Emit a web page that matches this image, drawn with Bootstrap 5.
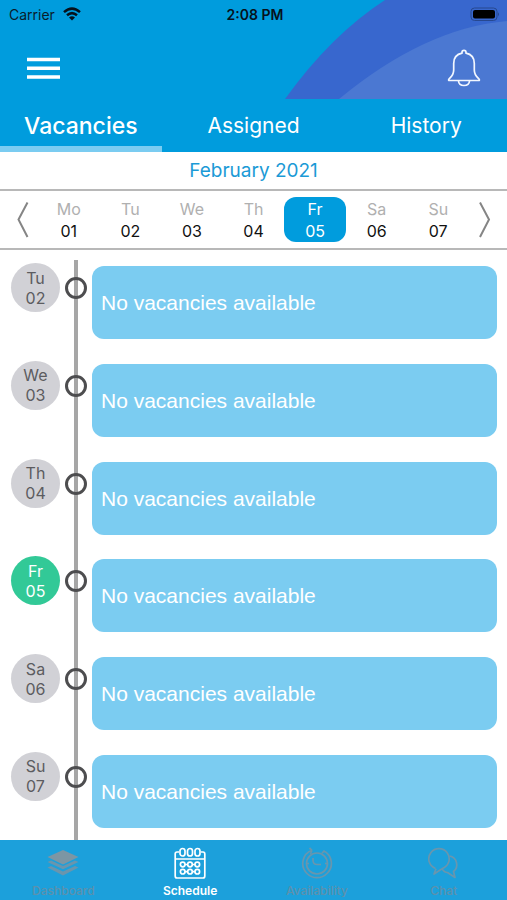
<!DOCTYPE html>
<html lang="en">
<head>
<meta charset="utf-8">
<meta name="viewport" content="width=device-width, initial-scale=1">
<title>Schedule</title>
<link href="https://cdn.jsdelivr.net/npm/bootstrap@5.3.0/dist/css/bootstrap.min.css" rel="stylesheet">
<style>
  :root { --sky: #009cdd; --pale: #7bccf1; --rule: #b8b8b8; }
  body { font-family: Inter, "Liberation Sans", sans-serif; background: #fff; color: #111; }
  button { border: 0; background: none; padding: 0; color: inherit; }
  svg { display: block; }
  .app-head { background: var(--sky); height: 99px; overflow: hidden; }
  .head-art { position: absolute; right: 0; top: 0; }
  .status-bar { height: 28px; font-size: 14px; padding: 0 6px 0 9px; color: #0a1c2c; }
  .status-bar > * { flex: 1 1 0; }
  .clock { font-weight: 600; color: #06121c; }
  .head-tools { padding: 20px 26px 0 27px; }
  .tab-bar { background: var(--sky); gap: 11px; height: 53px; }
  .tab-bar button { flex: 1 1 0; color: #fff; font-size: 21px; border-bottom: 6px solid transparent; padding-top: 7px; }
  .tab-bar button.current { font-size: 23px; font-weight: 500; border-color: var(--pale); }
  .month { height: 37px; font-size: 19px; line-height: 38px; color: #1b9ad6; }
  .week { border: solid var(--rule); border-width: 2px 0; padding: 6px 0; }
  .week > button { width: 38px; }
  .date-btn { flex: 1 1 0; height: 45px; border-radius: 12px; font-size: 16px; line-height: 22px; }
  .date-btn span { color: #b0b0b0; }
  .date-btn.current { background: var(--sky); color: #fff; }
  .date-btn.current span { color: #fff; }
  .agenda { padding: 13px 10px 12px 11px; gap: 12px; }
  .agenda::before { content: ""; position: absolute; left: 74px; top: 10px; bottom: 0; width: 4px; background: #a6a6a6; }
  .day-dot { width: 49px; height: 49px; background: #d1d1d6; color: #5c5c60; font-size: 16px; line-height: 20px; }
  .day-dot.today { background: #32c997; color: #fff; }
  .ring { width: 22px; height: 22px; border: 3px solid #4d4d4f; margin: 14px 5px 0; }
  .slot { background: var(--pale); color: #fff; border-radius: 12px; margin-top: 3px; min-height: 73px; padding: 1px 9px 0; font: 21px/24px "Liberation Sans", sans-serif; }
  .foot-nav { background: #1ca0db; height: 60px; }
  .foot-nav a { flex: 1 1 0; padding-top: 7px; color: #5c91ad; font-size: 12px; line-height: 14px; font-weight: 500; text-decoration: none; gap: 5px; }
  .foot-nav a.current { color: #fff; font-weight: 600; }
</style>
<script src="https://cdn.jsdelivr.net/npm/bootstrap@5.3.0/dist/js/bootstrap.bundle.min.js"></script>
</head>
<body class="d-flex flex-column min-vh-100">
<header>
  <div class="app-head position-relative">
    <svg class="head-art" width="222" height="99" viewBox="0 0 222 99" aria-hidden="true">
      <path d="M0 99Q46 35 100 0H222V99Z" fill="#3867ce"/>
      <path d="M54 99Q140 28 222 21V99Z" fill="#4b78d2"/>
    </svg>
    <div class="status-bar position-relative d-flex align-items-center">
      <div class="d-flex align-items-center gap-2">Carrier
        <svg width="18" height="14" viewBox="0 0 18 14" role="img" aria-label="Wi-Fi"><g fill="none" stroke="#06121c" stroke-width="2.5"><path d="M1 5.1Q9-1.9 17 5.1"/><path d="M4 8.3Q9 4 14 8.3"/></g><path d="M6 10.5Q9 8 12 10.5L9 13.6Z" fill="#06121c"/></svg>
      </div>
      <div class="clock text-center">2:08 PM</div>
      <div class="d-flex justify-content-end">
        <svg width="31" height="15" viewBox="0 0 31 15" role="img" aria-label="Battery"><rect x="1" y="1" width="26" height="12.500" rx="3.5" fill="none" stroke="#27488f"/><rect x="3" y="3" width="22" height="8.500" rx="2" fill="#000"/><path d="M28 5.300q2 2 0 4Z" fill="#27488f"/></svg>
      </div>
    </div>
    <div class="head-tools position-relative d-flex justify-content-between">
      <button type="button" aria-label="Menu">
        <svg width="33" height="40" viewBox="0 0 33 40"><path d="M0 11.500H33M0 20.200H33M0 29H33" stroke="#fff" stroke-width="3.600"/></svg>
      </button>
      <button type="button" aria-label="Notifications">
        <svg width="34" height="40" viewBox="0 0 34 40" fill="none" stroke="#f2f7ff" stroke-width="1.700" stroke-linejoin="round"><path d="M15 5.200V4.400a2 2 0 0 1 4 0V5.200C24.500 6.300 27.300 10.500 27.300 15.500V22C27.300 27 29.500 28.500 32 31Q33 32.500 31.500 32.500H2.500Q1 32.500 2 31C4.500 28.500 6.700 27 6.700 22V15.500C6.700 10.500 9.500 6.300 15 5.200Z"/><path d="M11.500 33C12 39 22 39 22.500 33"/></svg>
      </button>
    </div>
  </div>
  <nav class="tab-bar d-flex" aria-label="Shifts">
    <button type="button" class="current" aria-current="true">Vacancies</button>
    <button type="button">Assigned</button>
    <button type="button">History</button>
  </nav>
</header>
<div class="month text-center">February 2021</div>
<div class="week d-flex align-items-center">
  <button type="button" aria-label="Previous week"><svg width="38" height="45" viewBox="0 0 38 45" fill="none" stroke="#858585" stroke-width="2"><path d="M27.500 5.500L18.500 22.500L27.500 40"/></svg></button>
  <button type="button" class="date-btn"><span>Mo</span><br>01</button>
  <button type="button" class="date-btn"><span>Tu</span><br>02</button>
  <button type="button" class="date-btn"><span>We</span><br>03</button>
  <button type="button" class="date-btn"><span>Th</span><br>04</button>
  <button type="button" class="date-btn current" aria-pressed="true"><span>Fr</span><br>05</button>
  <button type="button" class="date-btn"><span>Sa</span><br>06</button>
  <button type="button" class="date-btn"><span>Su</span><br>07</button>
  <button type="button" aria-label="Next week"><svg width="38" height="45" viewBox="0 0 38 45" fill="none" stroke="#858585" stroke-width="2"><path d="M11 5.500L20 22.500L11 40"/></svg></button>
</div>
<main class="agenda position-relative flex-grow-1 d-flex flex-column justify-content-between">
  <div class="position-relative d-flex align-items-start"><div class="day-dot rounded-circle d-flex align-items-center justify-content-center text-center">Tu<br>02</div><div class="ring rounded-circle"></div><div class="slot flex-grow-1 d-flex align-items-center">No vacancies available</div></div>
  <div class="position-relative d-flex align-items-start"><div class="day-dot rounded-circle d-flex align-items-center justify-content-center text-center">We<br>03</div><div class="ring rounded-circle"></div><div class="slot flex-grow-1 d-flex align-items-center">No vacancies available</div></div>
  <div class="position-relative d-flex align-items-start"><div class="day-dot rounded-circle d-flex align-items-center justify-content-center text-center">Th<br>04</div><div class="ring rounded-circle"></div><div class="slot flex-grow-1 d-flex align-items-center">No vacancies available</div></div>
  <div class="position-relative d-flex align-items-start"><div class="day-dot today rounded-circle d-flex align-items-center justify-content-center text-center">Fr<br>05</div><div class="ring rounded-circle"></div><div class="slot flex-grow-1 d-flex align-items-center">No vacancies available</div></div>
  <div class="position-relative d-flex align-items-start"><div class="day-dot rounded-circle d-flex align-items-center justify-content-center text-center">Sa<br>06</div><div class="ring rounded-circle"></div><div class="slot flex-grow-1 d-flex align-items-center">No vacancies available</div></div>
  <div class="position-relative d-flex align-items-start"><div class="day-dot rounded-circle d-flex align-items-center justify-content-center text-center">Su<br>07</div><div class="ring rounded-circle"></div><div class="slot flex-grow-1 d-flex align-items-center">No vacancies available</div></div>
</main>
<nav class="foot-nav d-flex sticky-bottom" aria-label="Main">
  <a href="#dashboard" class="d-flex flex-column align-items-center">
    <svg width="32" height="32" viewBox="0 0 32 32" fill="#7c96a4"><path d="M16 3L31.500 10L16 17.500L.5 10Z"/><path d="M.5 15L4 13.500L16 19L28 13.500L31.500 15L16 22.300ZM.5 20.500L4 19L16 24.500L28 19L31.500 20.500L16 28.500Z" fill="#6a95ad"/></svg>
    Dashboard</a>
  <a href="#schedule" class="current d-flex flex-column align-items-center" aria-current="page">
    <svg width="32" height="32" viewBox="0 0 32 32" fill="none" stroke="#fff" stroke-width="1.700"><path d="M5 5H3Q1.200 5 1.200 7V29Q1.200 31 3 31H29Q30.800 31 30.800 29V7Q30.800 5 29 5H27M1.200 12H30.800"/><rect x="6" y="1.500" width="5" height="7.500" rx="2.500"/><rect x="13.500" y="1.500" width="5" height="7.500" rx="2.500"/><rect x="21" y="1.500" width="5" height="7.500" rx="2.500"/><circle cx="8.700" cy="17.500" r="2.300"/><circle cx="16" cy="17.500" r="2.300"/><circle cx="23.300" cy="17.500" r="2.300"/><circle cx="8.700" cy="24.700" r="2.300"/><circle cx="16" cy="24.700" r="2.300"/><circle cx="23.300" cy="24.700" r="2.300"/><path d="M11 17.500h2.700M18.300 17.500h2.700M11 24.700h2.700M18.300 24.700h2.700"/></svg>
    Schedule</a>
  <a href="#availability" class="d-flex flex-column align-items-center">
    <svg width="32" height="32" viewBox="0 0 32 32" fill="none" stroke="#6896ae" stroke-width="1.700"><path d="M11 3.300A14 14 0 0 0 6 26.500A14 14 0 0 0 26 26.500A14 14 0 0 0 23 4L21 6.200M11 3.300L8.500 1M11 3.300L9.500 7"/><circle cx="16" cy="16.500" r="10.500"/><path d="M12 11V14Q12.500 17.500 16 17.500H20M5.500 16.500H8M24 16.500H26.500"/></svg>
    Availability</a>
  <a href="#chat" class="d-flex flex-column align-items-center">
    <svg width="32" height="32" viewBox="0 0 32 32" fill="none" stroke="#6896ae" stroke-width="1.700" stroke-linejoin="round"><path d="M7.500 21.500A10.200 10.200 0 1 1 14.500 21.500L6 27L8 21.700"/><path d="M21.500 9A8.800 8.800 0 0 1 25.500 24.500L27 30.500L19.500 25.500Q16 25.500 14 21.700"/></svg>
    Chat</a>
</nav>
</body>
</html>
